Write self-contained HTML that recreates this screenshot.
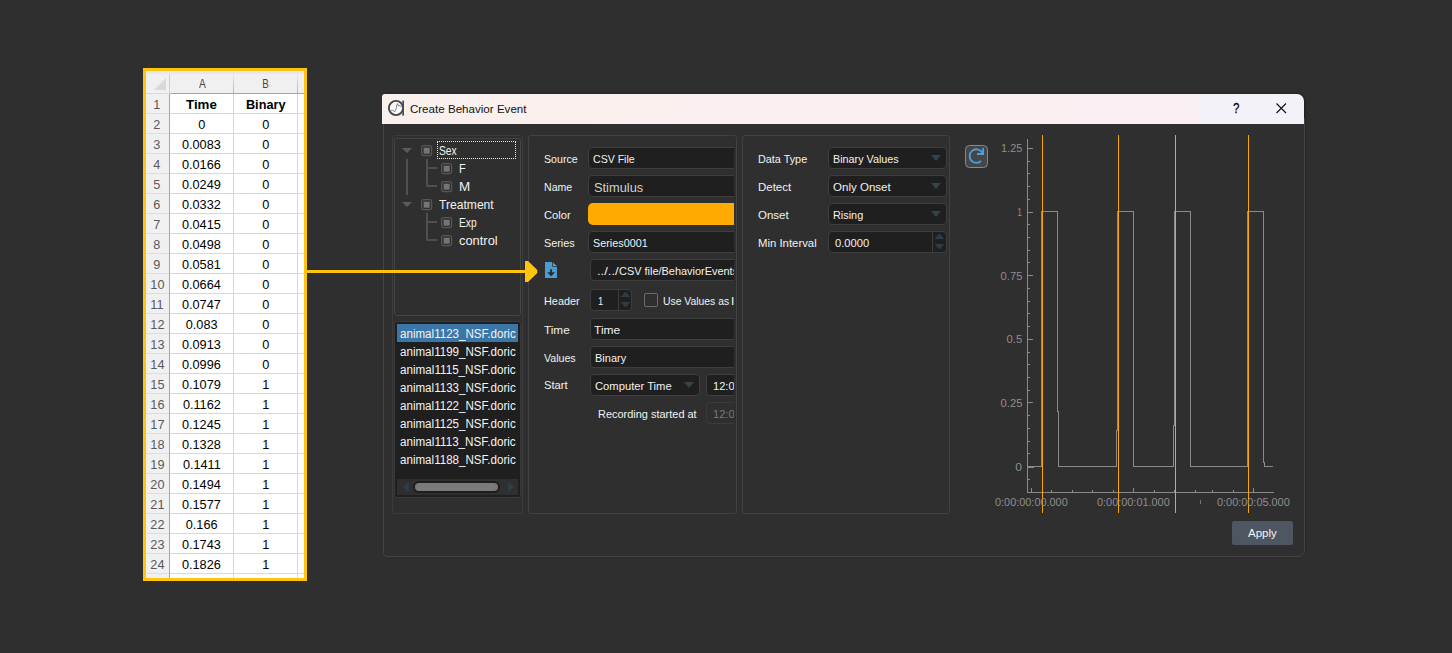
<!DOCTYPE html>
<html lang="en"><head><meta charset="utf-8"><title>Create Behavior Event</title>
<style>
html,body{margin:0;padding:0}
body{width:1452px;height:653px;overflow:hidden;background:#2f2f2f;position:relative;font-family:"Liberation Sans",sans-serif;}
.t{position:absolute;white-space:nowrap;line-height:20px;height:20px;display:block}
.abs{position:absolute}
.in{position:absolute;box-sizing:border-box;background:#1f1f1f;border:1px solid #3e3e3e;border-radius:4px}
.frame{position:absolute;box-sizing:border-box;border:1px solid #414141;border-radius:3px}
svg{position:absolute;overflow:visible}
</style></head><body>

<!-- spreadsheet -->
<div style="position:absolute;left:143px;top:68px;width:164px;height:513px;box-sizing:border-box;border:3px solid #ffc40d;background:#fff;"></div>
<div style="position:absolute;left:146px;top:71px;width:158px;height:3px;background:#e4e8f1"></div>
<div style="position:absolute;left:146px;top:74px;width:158px;height:19px;background:#f0f0f0"></div>
<div style="position:absolute;left:146px;top:93px;width:24px;height:485px;background:#f0f0f0"></div>
<div style="position:absolute;left:146px;top:93px;width:24px;height:1px;background:#dadada"></div>
<div style="position:absolute;left:170px;top:93px;width:134px;height:1px;background:#a6a6a6"></div>
<div style="position:absolute;left:169px;top:94px;width:1px;height:484px;background:#a6a6a6"></div>
<div style="position:absolute;left:169px;top:74px;width:1px;height:19px;background:#d0d0d0"></div>
<div style="position:absolute;left:233px;top:74px;width:1px;height:19px;background:linear-gradient(#e8e8e8,#b4b4b4)"></div>
<div style="position:absolute;left:297px;top:74px;width:1px;height:19px;background:linear-gradient(#e8e8e8,#b4b4b4)"></div>
<svg style="left:153px;top:77px" width="14" height="14"><polygon points="13,1 13,13 1,13" fill="#d9d9d9"/></svg>
<div style="position:absolute;left:170px;top:113px;width:134px;height:1px;background:#d8d8d8"></div>
<div style="position:absolute;left:146px;top:113px;width:23px;height:1px;background:#dedede"></div>
<div style="position:absolute;left:170px;top:133px;width:134px;height:1px;background:#d8d8d8"></div>
<div style="position:absolute;left:146px;top:133px;width:23px;height:1px;background:#dedede"></div>
<div style="position:absolute;left:170px;top:153px;width:134px;height:1px;background:#d8d8d8"></div>
<div style="position:absolute;left:146px;top:153px;width:23px;height:1px;background:#dedede"></div>
<div style="position:absolute;left:170px;top:173px;width:134px;height:1px;background:#d8d8d8"></div>
<div style="position:absolute;left:146px;top:173px;width:23px;height:1px;background:#dedede"></div>
<div style="position:absolute;left:170px;top:193px;width:134px;height:1px;background:#d8d8d8"></div>
<div style="position:absolute;left:146px;top:193px;width:23px;height:1px;background:#dedede"></div>
<div style="position:absolute;left:170px;top:213px;width:134px;height:1px;background:#d8d8d8"></div>
<div style="position:absolute;left:146px;top:213px;width:23px;height:1px;background:#dedede"></div>
<div style="position:absolute;left:170px;top:233px;width:134px;height:1px;background:#d8d8d8"></div>
<div style="position:absolute;left:146px;top:233px;width:23px;height:1px;background:#dedede"></div>
<div style="position:absolute;left:170px;top:253px;width:134px;height:1px;background:#d8d8d8"></div>
<div style="position:absolute;left:146px;top:253px;width:23px;height:1px;background:#dedede"></div>
<div style="position:absolute;left:170px;top:273px;width:134px;height:1px;background:#d8d8d8"></div>
<div style="position:absolute;left:146px;top:273px;width:23px;height:1px;background:#dedede"></div>
<div style="position:absolute;left:170px;top:293px;width:134px;height:1px;background:#d8d8d8"></div>
<div style="position:absolute;left:146px;top:293px;width:23px;height:1px;background:#dedede"></div>
<div style="position:absolute;left:170px;top:313px;width:134px;height:1px;background:#d8d8d8"></div>
<div style="position:absolute;left:146px;top:313px;width:23px;height:1px;background:#dedede"></div>
<div style="position:absolute;left:170px;top:333px;width:134px;height:1px;background:#d8d8d8"></div>
<div style="position:absolute;left:146px;top:333px;width:23px;height:1px;background:#dedede"></div>
<div style="position:absolute;left:170px;top:353px;width:134px;height:1px;background:#d8d8d8"></div>
<div style="position:absolute;left:146px;top:353px;width:23px;height:1px;background:#dedede"></div>
<div style="position:absolute;left:170px;top:373px;width:134px;height:1px;background:#d8d8d8"></div>
<div style="position:absolute;left:146px;top:373px;width:23px;height:1px;background:#dedede"></div>
<div style="position:absolute;left:170px;top:393px;width:134px;height:1px;background:#d8d8d8"></div>
<div style="position:absolute;left:146px;top:393px;width:23px;height:1px;background:#dedede"></div>
<div style="position:absolute;left:170px;top:413px;width:134px;height:1px;background:#d8d8d8"></div>
<div style="position:absolute;left:146px;top:413px;width:23px;height:1px;background:#dedede"></div>
<div style="position:absolute;left:170px;top:433px;width:134px;height:1px;background:#d8d8d8"></div>
<div style="position:absolute;left:146px;top:433px;width:23px;height:1px;background:#dedede"></div>
<div style="position:absolute;left:170px;top:453px;width:134px;height:1px;background:#d8d8d8"></div>
<div style="position:absolute;left:146px;top:453px;width:23px;height:1px;background:#dedede"></div>
<div style="position:absolute;left:170px;top:473px;width:134px;height:1px;background:#d8d8d8"></div>
<div style="position:absolute;left:146px;top:473px;width:23px;height:1px;background:#dedede"></div>
<div style="position:absolute;left:170px;top:493px;width:134px;height:1px;background:#d8d8d8"></div>
<div style="position:absolute;left:146px;top:493px;width:23px;height:1px;background:#dedede"></div>
<div style="position:absolute;left:170px;top:513px;width:134px;height:1px;background:#d8d8d8"></div>
<div style="position:absolute;left:146px;top:513px;width:23px;height:1px;background:#dedede"></div>
<div style="position:absolute;left:170px;top:533px;width:134px;height:1px;background:#d8d8d8"></div>
<div style="position:absolute;left:146px;top:533px;width:23px;height:1px;background:#dedede"></div>
<div style="position:absolute;left:170px;top:553px;width:134px;height:1px;background:#d8d8d8"></div>
<div style="position:absolute;left:146px;top:553px;width:23px;height:1px;background:#dedede"></div>
<div style="position:absolute;left:170px;top:573px;width:134px;height:1px;background:#d8d8d8"></div>
<div style="position:absolute;left:146px;top:573px;width:23px;height:1px;background:#dedede"></div>
<div style="position:absolute;left:233px;top:94px;width:1px;height:484px;background:#d8d8d8"></div>
<div style="position:absolute;left:297px;top:94px;width:1px;height:484px;background:#d8d8d8"></div>
<span class="t" style="left:197.56px;top:73.50px;font-size:13.3px;color:#444;transform:scaleX(0.7700);transform-origin:50% 50%;">A</span>
<span class="t" style="left:261.06px;top:73.50px;font-size:13.3px;color:#444;transform:scaleX(0.7300);transform-origin:50% 50%;">B</span>
<span class="t" style="left:153.30px;top:94.50px;font-size:13.3px;color:#595959;transform:scaleX(0.9550);transform-origin:50% 50%;">1</span>
<span class="t" style="left:186.00px;top:94.50px;font-size:13.3px;color:#000;font-weight:700;">Time</span>
<span class="t" style="left:244.80px;top:94.50px;font-size:13.3px;color:#000;font-weight:700;transform:scaleX(0.9550);transform-origin:50% 50%;">Binary</span>
<span class="t" style="left:153.30px;top:114.50px;font-size:13.3px;color:#595959;transform:scaleX(0.9550);transform-origin:50% 50%;">2</span>
<span class="t" style="left:197.70px;top:114.50px;font-size:13.3px;color:#000;transform:scaleX(0.9550);transform-origin:50% 50%;">0</span>
<span class="t" style="left:261.80px;top:114.50px;font-size:13.3px;color:#000;transform:scaleX(0.9550);transform-origin:50% 50%;">0</span>
<span class="t" style="left:153.30px;top:134.50px;font-size:13.3px;color:#595959;transform:scaleX(0.9550);transform-origin:50% 50%;">3</span>
<span class="t" style="left:181.06px;top:134.50px;font-size:13.3px;color:#000;transform:scaleX(0.9550);transform-origin:50% 50%;">0.0083</span>
<span class="t" style="left:261.80px;top:134.50px;font-size:13.3px;color:#000;transform:scaleX(0.9550);transform-origin:50% 50%;">0</span>
<span class="t" style="left:153.30px;top:154.50px;font-size:13.3px;color:#595959;transform:scaleX(0.9550);transform-origin:50% 50%;">4</span>
<span class="t" style="left:181.06px;top:154.50px;font-size:13.3px;color:#000;transform:scaleX(0.9550);transform-origin:50% 50%;">0.0166</span>
<span class="t" style="left:261.80px;top:154.50px;font-size:13.3px;color:#000;transform:scaleX(0.9550);transform-origin:50% 50%;">0</span>
<span class="t" style="left:153.30px;top:174.50px;font-size:13.3px;color:#595959;transform:scaleX(0.9550);transform-origin:50% 50%;">5</span>
<span class="t" style="left:181.06px;top:174.50px;font-size:13.3px;color:#000;transform:scaleX(0.9550);transform-origin:50% 50%;">0.0249</span>
<span class="t" style="left:261.80px;top:174.50px;font-size:13.3px;color:#000;transform:scaleX(0.9550);transform-origin:50% 50%;">0</span>
<span class="t" style="left:153.30px;top:194.50px;font-size:13.3px;color:#595959;transform:scaleX(0.9550);transform-origin:50% 50%;">6</span>
<span class="t" style="left:181.06px;top:194.50px;font-size:13.3px;color:#000;transform:scaleX(0.9550);transform-origin:50% 50%;">0.0332</span>
<span class="t" style="left:261.80px;top:194.50px;font-size:13.3px;color:#000;transform:scaleX(0.9550);transform-origin:50% 50%;">0</span>
<span class="t" style="left:153.30px;top:214.50px;font-size:13.3px;color:#595959;transform:scaleX(0.9550);transform-origin:50% 50%;">7</span>
<span class="t" style="left:181.06px;top:214.50px;font-size:13.3px;color:#000;transform:scaleX(0.9550);transform-origin:50% 50%;">0.0415</span>
<span class="t" style="left:261.80px;top:214.50px;font-size:13.3px;color:#000;transform:scaleX(0.9550);transform-origin:50% 50%;">0</span>
<span class="t" style="left:153.30px;top:234.50px;font-size:13.3px;color:#595959;transform:scaleX(0.9550);transform-origin:50% 50%;">8</span>
<span class="t" style="left:181.06px;top:234.50px;font-size:13.3px;color:#000;transform:scaleX(0.9550);transform-origin:50% 50%;">0.0498</span>
<span class="t" style="left:261.80px;top:234.50px;font-size:13.3px;color:#000;transform:scaleX(0.9550);transform-origin:50% 50%;">0</span>
<span class="t" style="left:153.30px;top:254.50px;font-size:13.3px;color:#595959;transform:scaleX(0.9550);transform-origin:50% 50%;">9</span>
<span class="t" style="left:181.06px;top:254.50px;font-size:13.3px;color:#000;transform:scaleX(0.9550);transform-origin:50% 50%;">0.0581</span>
<span class="t" style="left:261.80px;top:254.50px;font-size:13.3px;color:#000;transform:scaleX(0.9550);transform-origin:50% 50%;">0</span>
<span class="t" style="left:149.60px;top:274.50px;font-size:13.3px;color:#595959;transform:scaleX(0.9550);transform-origin:50% 50%;">10</span>
<span class="t" style="left:181.06px;top:274.50px;font-size:13.3px;color:#000;transform:scaleX(0.9550);transform-origin:50% 50%;">0.0664</span>
<span class="t" style="left:261.80px;top:274.50px;font-size:13.3px;color:#000;transform:scaleX(0.9550);transform-origin:50% 50%;">0</span>
<span class="t" style="left:150.10px;top:294.50px;font-size:13.3px;color:#595959;transform:scaleX(0.9550);transform-origin:50% 50%;">11</span>
<span class="t" style="left:181.06px;top:294.50px;font-size:13.3px;color:#000;transform:scaleX(0.9550);transform-origin:50% 50%;">0.0747</span>
<span class="t" style="left:261.80px;top:294.50px;font-size:13.3px;color:#000;transform:scaleX(0.9550);transform-origin:50% 50%;">0</span>
<span class="t" style="left:149.60px;top:314.50px;font-size:13.3px;color:#595959;transform:scaleX(0.9550);transform-origin:50% 50%;">12</span>
<span class="t" style="left:184.76px;top:314.50px;font-size:13.3px;color:#000;transform:scaleX(0.9550);transform-origin:50% 50%;">0.083</span>
<span class="t" style="left:261.80px;top:314.50px;font-size:13.3px;color:#000;transform:scaleX(0.9550);transform-origin:50% 50%;">0</span>
<span class="t" style="left:149.60px;top:334.50px;font-size:13.3px;color:#595959;transform:scaleX(0.9550);transform-origin:50% 50%;">13</span>
<span class="t" style="left:181.06px;top:334.50px;font-size:13.3px;color:#000;transform:scaleX(0.9550);transform-origin:50% 50%;">0.0913</span>
<span class="t" style="left:261.80px;top:334.50px;font-size:13.3px;color:#000;transform:scaleX(0.9550);transform-origin:50% 50%;">0</span>
<span class="t" style="left:149.60px;top:354.50px;font-size:13.3px;color:#595959;transform:scaleX(0.9550);transform-origin:50% 50%;">14</span>
<span class="t" style="left:181.06px;top:354.50px;font-size:13.3px;color:#000;transform:scaleX(0.9550);transform-origin:50% 50%;">0.0996</span>
<span class="t" style="left:261.80px;top:354.50px;font-size:13.3px;color:#000;transform:scaleX(0.9550);transform-origin:50% 50%;">0</span>
<span class="t" style="left:149.60px;top:374.50px;font-size:13.3px;color:#595959;transform:scaleX(0.9550);transform-origin:50% 50%;">15</span>
<span class="t" style="left:181.06px;top:374.50px;font-size:13.3px;color:#000;transform:scaleX(0.9550);transform-origin:50% 50%;">0.1079</span>
<span class="t" style="left:261.80px;top:374.50px;font-size:13.3px;color:#000;transform:scaleX(0.9550);transform-origin:50% 50%;">1</span>
<span class="t" style="left:149.60px;top:394.50px;font-size:13.3px;color:#595959;transform:scaleX(0.9550);transform-origin:50% 50%;">16</span>
<span class="t" style="left:181.55px;top:394.50px;font-size:13.3px;color:#000;transform:scaleX(0.9550);transform-origin:50% 50%;">0.1162</span>
<span class="t" style="left:261.80px;top:394.50px;font-size:13.3px;color:#000;transform:scaleX(0.9550);transform-origin:50% 50%;">1</span>
<span class="t" style="left:149.60px;top:414.50px;font-size:13.3px;color:#595959;transform:scaleX(0.9550);transform-origin:50% 50%;">17</span>
<span class="t" style="left:181.06px;top:414.50px;font-size:13.3px;color:#000;transform:scaleX(0.9550);transform-origin:50% 50%;">0.1245</span>
<span class="t" style="left:261.80px;top:414.50px;font-size:13.3px;color:#000;transform:scaleX(0.9550);transform-origin:50% 50%;">1</span>
<span class="t" style="left:149.60px;top:434.50px;font-size:13.3px;color:#595959;transform:scaleX(0.9550);transform-origin:50% 50%;">18</span>
<span class="t" style="left:181.06px;top:434.50px;font-size:13.3px;color:#000;transform:scaleX(0.9550);transform-origin:50% 50%;">0.1328</span>
<span class="t" style="left:261.80px;top:434.50px;font-size:13.3px;color:#000;transform:scaleX(0.9550);transform-origin:50% 50%;">1</span>
<span class="t" style="left:149.60px;top:454.50px;font-size:13.3px;color:#595959;transform:scaleX(0.9550);transform-origin:50% 50%;">19</span>
<span class="t" style="left:181.55px;top:454.50px;font-size:13.3px;color:#000;transform:scaleX(0.9550);transform-origin:50% 50%;">0.1411</span>
<span class="t" style="left:261.80px;top:454.50px;font-size:13.3px;color:#000;transform:scaleX(0.9550);transform-origin:50% 50%;">1</span>
<span class="t" style="left:149.60px;top:474.50px;font-size:13.3px;color:#595959;transform:scaleX(0.9550);transform-origin:50% 50%;">20</span>
<span class="t" style="left:181.06px;top:474.50px;font-size:13.3px;color:#000;transform:scaleX(0.9550);transform-origin:50% 50%;">0.1494</span>
<span class="t" style="left:261.80px;top:474.50px;font-size:13.3px;color:#000;transform:scaleX(0.9550);transform-origin:50% 50%;">1</span>
<span class="t" style="left:149.60px;top:494.50px;font-size:13.3px;color:#595959;transform:scaleX(0.9550);transform-origin:50% 50%;">21</span>
<span class="t" style="left:181.06px;top:494.50px;font-size:13.3px;color:#000;transform:scaleX(0.9550);transform-origin:50% 50%;">0.1577</span>
<span class="t" style="left:261.80px;top:494.50px;font-size:13.3px;color:#000;transform:scaleX(0.9550);transform-origin:50% 50%;">1</span>
<span class="t" style="left:149.60px;top:514.50px;font-size:13.3px;color:#595959;transform:scaleX(0.9550);transform-origin:50% 50%;">22</span>
<span class="t" style="left:184.76px;top:514.50px;font-size:13.3px;color:#000;transform:scaleX(0.9550);transform-origin:50% 50%;">0.166</span>
<span class="t" style="left:261.80px;top:514.50px;font-size:13.3px;color:#000;transform:scaleX(0.9550);transform-origin:50% 50%;">1</span>
<span class="t" style="left:149.60px;top:534.50px;font-size:13.3px;color:#595959;transform:scaleX(0.9550);transform-origin:50% 50%;">23</span>
<span class="t" style="left:181.06px;top:534.50px;font-size:13.3px;color:#000;transform:scaleX(0.9550);transform-origin:50% 50%;">0.1743</span>
<span class="t" style="left:261.80px;top:534.50px;font-size:13.3px;color:#000;transform:scaleX(0.9550);transform-origin:50% 50%;">1</span>
<span class="t" style="left:149.60px;top:554.50px;font-size:13.3px;color:#595959;transform:scaleX(0.9550);transform-origin:50% 50%;">24</span>
<span class="t" style="left:181.06px;top:554.50px;font-size:13.3px;color:#000;transform:scaleX(0.9550);transform-origin:50% 50%;">0.1826</span>
<span class="t" style="left:261.80px;top:554.50px;font-size:13.3px;color:#000;transform:scaleX(0.9550);transform-origin:50% 50%;">1</span>
<!-- dialog -->
<div style="position:absolute;left:386px;top:95px;width:918px;height:460px;border-radius:3px 7px 7px 4px;box-shadow:0 0 3px 1px rgba(0,0,0,0.42)"></div>
<div style="position:absolute;left:383px;top:118px;width:922px;height:439px;box-sizing:border-box;border:1px solid #444;border-radius:0 0 7px 4px;background:#2f2f2f"></div>
<div style="position:absolute;left:382px;top:94px;width:922.3px;height:30px;border-radius:3px 7px 0 0;background:linear-gradient(90deg,#f9f0ee 0%,#faf0f0 65%,#faeff4 88.3%,#f2f2f8 88.9%,#f2f3f9 100%)"></div>
<svg style="left:387px;top:99px" width="20" height="20" viewBox="0 0 20 20">
<circle cx="9" cy="9" r="7.1" fill="#fcfcfc" stroke="#474a4c" stroke-width="1.9"/>
<rect x="15.3" y="1.6" width="1.7" height="15.1" fill="#4b4e50"/>
<polyline points="4.2,11.5 5.8,11.1 7,12.1 7.7,12.9 8.7,11.3 10.3,4.6 11.7,7 12.9,6.4 13.7,7 14.9,8.6" fill="none" stroke="#7d8184" stroke-width="1" stroke-linejoin="round"/>
</svg>
<span class="t" style="left:409.90px;top:99.00px;font-size:11.6px;color:#111;">Create Behavior Event</span>
<span class="t" style="left:1233.00px;top:98.20px;font-size:14px;color:#0a0a0a;transform:scaleX(0.8220);transform-origin:0 50%;-webkit-text-stroke:0.3px #0a0a0a;">?</span>
<svg style="left:1276px;top:103px" width="11" height="11"><path d="M0.5,0.5 L10,10 M10,0.5 L0.5,10" stroke="#111" stroke-width="1.1" fill="none"/></svg>
<div class="frame" style="left:392px;top:135px;width:131px;height:379px;border-color:#3c3c3c"></div>
<div class="frame" style="left:394px;top:138px;width:127px;height:178px;border-color:#444"></div>
<div class="frame" style="left:394px;top:321px;width:127px;height:176.6px;border-color:#3a3a3a;background:#1f1f1f"></div>
<svg style="left:402px;top:148px" width="10" height="5"><polygon points="0,0 10,0 5,5" fill="#5c5c5c"/></svg>
<svg style="left:421px;top:145px" width="12" height="12"><rect x="0.6" y="0.6" width="10" height="10" rx="2" fill="#2f2f2f" stroke="#575757" stroke-width="1.2"/><rect x="2.6" y="2.7" width="6.1" height="6" fill="#747474"/></svg>
<svg style="left:402px;top:202px" width="10" height="5"><polygon points="0,0 10,0 5,5" fill="#5c5c5c"/></svg>
<svg style="left:421px;top:199px" width="12" height="12"><rect x="0.6" y="0.6" width="10" height="10" rx="2" fill="#2f2f2f" stroke="#575757" stroke-width="1.2"/><rect x="2.6" y="2.7" width="6.1" height="6" fill="#747474"/></svg>
<svg style="left:441px;top:163px" width="12" height="12"><rect x="0.6" y="0.6" width="10" height="10" rx="2" fill="#2f2f2f" stroke="#575757" stroke-width="1.2"/><rect x="2.6" y="2.7" width="6.1" height="6" fill="#747474"/></svg>
<svg style="left:441px;top:181px" width="12" height="12"><rect x="0.6" y="0.6" width="10" height="10" rx="2" fill="#2f2f2f" stroke="#575757" stroke-width="1.2"/><rect x="2.6" y="2.7" width="6.1" height="6" fill="#747474"/></svg>
<svg style="left:441px;top:217px" width="12" height="12"><rect x="0.6" y="0.6" width="10" height="10" rx="2" fill="#2f2f2f" stroke="#575757" stroke-width="1.2"/><rect x="2.6" y="2.7" width="6.1" height="6" fill="#747474"/></svg>
<svg style="left:441px;top:235px" width="12" height="12"><rect x="0.6" y="0.6" width="10" height="10" rx="2" fill="#2f2f2f" stroke="#575757" stroke-width="1.2"/><rect x="2.6" y="2.7" width="6.1" height="6" fill="#747474"/></svg>
<div style="position:absolute;left:406px;top:159px;width:2px;height:36px;background:#505050"></div>
<div style="position:absolute;left:426.3px;top:159px;width:1.8px;height:27.5px;background:#505050;border-radius:0 0 0 2px"></div>
<div style="position:absolute;left:426.3px;top:167px;width:10.7px;height:2px;background:#505050;border-radius:0 0 0 2px"></div>
<div style="position:absolute;left:426.3px;top:184.6px;width:10.7px;height:2px;background:#505050;border-radius:0 0 0 2px"></div>
<div style="position:absolute;left:426.3px;top:213px;width:1.8px;height:27.5px;background:#505050;border-radius:0 0 0 2px"></div>
<div style="position:absolute;left:426.3px;top:221px;width:10.7px;height:2px;background:#505050;border-radius:0 0 0 2px"></div>
<div style="position:absolute;left:426.3px;top:238.6px;width:10.7px;height:2px;background:#505050;border-radius:0 0 0 2px"></div>
<div style="position:absolute;left:437px;top:141px;width:79px;height:18px;box-sizing:border-box;border:1px dotted #e8e8e8"></div>
<span class="t" style="left:438.90px;top:141.00px;font-size:12.5px;color:#f2f2f2;transform:scaleX(0.8217);transform-origin:0 50%;">Sex</span>
<span class="t" style="left:459.40px;top:159.00px;font-size:12.5px;color:#f2f2f2;transform:scaleX(0.8775);transform-origin:0 50%;">F</span>
<span class="t" style="left:459.40px;top:177.00px;font-size:12.5px;color:#f2f2f2;transform:scaleX(1.0756);transform-origin:0 50%;">M</span>
<span class="t" style="left:438.90px;top:195.00px;font-size:12.5px;color:#f2f2f2;transform:scaleX(0.9681);transform-origin:0 50%;">Treatment</span>
<span class="t" style="left:459.40px;top:213.00px;font-size:12.5px;color:#f2f2f2;transform:scaleX(0.8217);transform-origin:0 50%;">Exp</span>
<span class="t" style="left:459.40px;top:231.00px;font-size:12.5px;color:#f2f2f2;transform:scaleX(1.0315);transform-origin:0 50%;">control</span>
<div style="position:absolute;left:397px;top:324px;width:120.5px;height:18px;background:#3a77a8"></div>
<span class="t" style="left:400.40px;top:324.00px;font-size:12.5px;color:#f4f4f4;transform:scaleX(0.9268);transform-origin:0 50%;">animal1123_NSF.doric</span>
<span class="t" style="left:400.40px;top:342.00px;font-size:12.5px;color:#f4f4f4;transform:scaleX(0.9268);transform-origin:0 50%;">animal1199_NSF.doric</span>
<span class="t" style="left:400.40px;top:360.00px;font-size:12.5px;color:#f4f4f4;transform:scaleX(0.9338);transform-origin:0 50%;">animal1115_NSF.doric</span>
<span class="t" style="left:400.40px;top:378.00px;font-size:12.5px;color:#f4f4f4;transform:scaleX(0.9268);transform-origin:0 50%;">animal1133_NSF.doric</span>
<span class="t" style="left:400.40px;top:396.00px;font-size:12.5px;color:#f4f4f4;transform:scaleX(0.9268);transform-origin:0 50%;">animal1122_NSF.doric</span>
<span class="t" style="left:400.40px;top:414.00px;font-size:12.5px;color:#f4f4f4;transform:scaleX(0.9268);transform-origin:0 50%;">animal1125_NSF.doric</span>
<span class="t" style="left:400.40px;top:432.00px;font-size:12.5px;color:#f4f4f4;transform:scaleX(0.9338);transform-origin:0 50%;">animal1113_NSF.doric</span>
<span class="t" style="left:400.40px;top:450.00px;font-size:12.5px;color:#f4f4f4;transform:scaleX(0.9268);transform-origin:0 50%;">animal1188_NSF.doric</span>
<div style="position:absolute;left:397px;top:479px;width:121px;height:16px;background:#2f2f2f"></div>
<div style="position:absolute;left:413px;top:481px;width:87px;height:12px;background:#1e1e1e;border-radius:6px"></div>
<div style="position:absolute;left:415px;top:482.6px;width:83px;height:8.6px;background:#7a7a7a;border-radius:4.3px"></div>
<svg style="left:403px;top:482px" width="6" height="10"><polygon points="5.6,0 5.6,10 0.4,5" fill="#2f404d"/></svg>
<svg style="left:508px;top:482px" width="6" height="10"><polygon points="0.4,0 0.4,10 5.6,5" fill="#2f404d"/></svg>
<div class="frame" style="left:528px;top:135px;width:209px;height:379px"></div>
<div class="abs" style="left:529px;top:136px;width:205px;height:377px;overflow:hidden"><div class="abs" style="left:-529px;top:-136px;width:1452px;height:653px">
<span class="t" style="left:543.90px;top:149.00px;font-size:11.6px;color:#f2f2f2;transform:scaleX(0.9169);transform-origin:0 50%;">Source</span>
<span class="t" style="left:543.90px;top:177.00px;font-size:11.6px;color:#f2f2f2;transform:scaleX(0.9114);transform-origin:0 50%;">Name</span>
<span class="t" style="left:543.90px;top:205.00px;font-size:11.6px;color:#f2f2f2;transform:scaleX(0.9632);transform-origin:0 50%;">Color</span>
<span class="t" style="left:543.90px;top:233.00px;font-size:11.6px;color:#f2f2f2;transform:scaleX(0.9337);transform-origin:0 50%;">Series</span>
<span class="t" style="left:543.90px;top:291.00px;font-size:11.6px;color:#f2f2f2;transform:scaleX(0.9383);transform-origin:0 50%;">Header</span>
<span class="t" style="left:544.20px;top:320.00px;font-size:11.6px;color:#f2f2f2;transform:scaleX(1.0139);transform-origin:0 50%;">Time</span>
<span class="t" style="left:544.20px;top:348.00px;font-size:11.6px;color:#f2f2f2;transform:scaleX(0.9160);transform-origin:0 50%;">Values</span>
<span class="t" style="left:543.90px;top:375.00px;font-size:11.6px;color:#f2f2f2;transform:scaleX(0.9675);transform-origin:0 50%;">Start</span>
<div class="in" style="left:588px;top:147px;width:160px;height:22px"></div>
<div class="in" style="left:588px;top:175px;width:160px;height:22px"></div>
<div class="in" style="left:588px;top:231px;width:160px;height:22px"></div>
<div style="position:absolute;left:588px;top:203px;width:160px;height:22px;background:#ffaa00;border-radius:5px"></div>
<span class="t" style="left:592.90px;top:149.00px;font-size:11.6px;color:#f2f2f2;transform:scaleX(0.9112);transform-origin:0 50%;">CSV File</span>
<span class="t" style="left:593.90px;top:177.50px;font-size:13.5px;color:#d2d2d2;transform:scaleX(0.9504);transform-origin:0 50%;">Stimulus</span>
<span class="t" style="left:592.90px;top:233.00px;font-size:11.6px;color:#f2f2f2;transform:scaleX(0.9321);transform-origin:0 50%;">Series0001</span>
<svg style="left:545px;top:262px" width="12" height="16" viewBox="0 0 12 16">
<path d="M0,0 H7.2 V4.8 H12 V16 H0 Z" fill="#4b9cd3"/>
<path d="M8.1,0.4 V3.9 H11.7 Z" fill="#58aee8"/>
<path d="M5.2,7.2 H7 V10.2 H10 L6.1,14.2 L2.2,10.2 H5.2 Z" fill="#2b2b2b"/>
</svg>
<div class="in" style="left:590.4px;top:259px;width:160px;height:22px"></div>
<span class="t" style="left:596.90px;top:261.00px;font-size:11.6px;color:#f2f2f2;transform:scaleX(1.1222);transform-origin:0 50%;">../../</span>
<span class="t" style="left:618.90px;top:261.00px;font-size:11.6px;color:#f2f2f2;transform:scaleX(0.9432);transform-origin:0 50%;">CSV file/BehaviorEvents</span>
<div class="in" style="left:590.4px;top:289px;width:42px;height:22px"></div>
<div style="position:absolute;left:618px;top:290px;width:1px;height:20px;background:#3e3e3e"></div>
<svg style="left:620px;top:291px" width="11" height="18"><polygon points="5.5,0.5 10.5,6 0.5,6" fill="#2c3c48"/><polygon points="0.5,11 10.5,11 5.5,16.5" fill="#2c3c48"/></svg>
<span class="t" style="left:597.90px;top:291.00px;font-size:11.6px;color:#f2f2f2;transform:scaleX(0.8060);transform-origin:0 50%;">1</span>
<div style="position:absolute;left:644px;top:293px;width:14px;height:14px;box-sizing:border-box;border:1px solid #6a6a6a;border-radius:2px;background:#2f2f2f"></div>
<span class="t" style="left:662.90px;top:291.00px;font-size:11.6px;color:#f2f2f2;transform:scaleX(0.8954);transform-origin:0 50%;">Use Values as</span>
<span class="t" style="left:731.40px;top:291.00px;font-size:11.6px;color:#f2f2f2;transform:scaleX(1.0290);transform-origin:0 50%;">Index</span>
<div class="in" style="left:590px;top:318px;width:160px;height:22px"></div>
<div class="in" style="left:590px;top:346px;width:160px;height:22px"></div>
<span class="t" style="left:594.40px;top:320.00px;font-size:11.6px;color:#f2f2f2;transform:scaleX(1.0337);transform-origin:0 50%;">Time</span>
<span class="t" style="left:594.90px;top:348.00px;font-size:11.6px;color:#f2f2f2;transform:scaleX(0.9489);transform-origin:0 50%;">Binary</span>
<div class="in" style="left:590px;top:374px;width:110px;height:22px"></div>
<span class="t" style="left:594.90px;top:376.00px;font-size:11.6px;color:#f2f2f2;transform:scaleX(0.9673);transform-origin:0 50%;">Computer Time</span>
<svg style="left:684px;top:382px" width="10" height="6"><polygon points="0,0 10,0 5,6" fill="#33444f"/></svg>
<div class="in" style="left:706px;top:374px;width:60px;height:22px"></div>
<span class="t" style="left:712.90px;top:376.00px;font-size:11.6px;color:#f2f2f2;transform:scaleX(0.9567);transform-origin:0 50%;">12:00:00</span>
<span class="t" style="left:597.90px;top:404.00px;font-size:11.6px;color:#f2f2f2;transform:scaleX(0.9449);transform-origin:0 50%;">Recording started at</span>
<div class="in" style="left:706px;top:402px;width:60px;height:22px;background:#2f2f2f;border-color:#3b3b3b"></div>
<span class="t" style="left:712.90px;top:404.00px;font-size:11.6px;color:#7a7a7a;transform:scaleX(0.9567);transform-origin:0 50%;">12:00:00</span>
</div></div>
<div class="frame" style="left:742px;top:135px;width:208px;height:379px"></div>
<span class="t" style="left:758.40px;top:149.00px;font-size:11.6px;color:#f2f2f2;transform:scaleX(0.9342);transform-origin:0 50%;">Data Type</span>
<span class="t" style="left:758.40px;top:177.00px;font-size:11.6px;color:#f2f2f2;transform:scaleX(0.9903);transform-origin:0 50%;">Detect</span>
<span class="t" style="left:757.90px;top:205.00px;font-size:11.6px;color:#f2f2f2;transform:scaleX(0.9920);transform-origin:0 50%;">Onset</span>
<span class="t" style="left:758.40px;top:233.00px;font-size:11.6px;color:#f2f2f2;transform:scaleX(0.9791);transform-origin:0 50%;">Min Interval</span>
<div class="in" style="left:828px;top:147px;width:119px;height:22px"></div>
<div class="in" style="left:828px;top:175px;width:119px;height:22px"></div>
<div class="in" style="left:828px;top:203px;width:119px;height:22px"></div>
<div class="in" style="left:828px;top:231px;width:119px;height:22px"></div>
<svg style="left:931px;top:155px" width="10" height="6"><polygon points="0,0 10,0 5,6" fill="#33444f"/></svg>
<svg style="left:931px;top:183px" width="10" height="6"><polygon points="0,0 10,0 5,6" fill="#33444f"/></svg>
<svg style="left:931px;top:211px" width="10" height="6"><polygon points="0,0 10,0 5,6" fill="#33444f"/></svg>
<span class="t" style="left:832.90px;top:149.00px;font-size:11.6px;color:#f2f2f2;transform:scaleX(0.9291);transform-origin:0 50%;">Binary Values</span>
<span class="t" style="left:832.90px;top:177.00px;font-size:11.6px;color:#f2f2f2;transform:scaleX(0.9944);transform-origin:0 50%;">Only Onset</span>
<span class="t" style="left:833.40px;top:205.00px;font-size:11.6px;color:#f2f2f2;transform:scaleX(0.9369);transform-origin:0 50%;">Rising</span>
<span class="t" style="left:834.90px;top:233.00px;font-size:11.6px;color:#f2f2f2;transform:scaleX(0.9639);transform-origin:0 50%;">0.0000</span>
<div style="position:absolute;left:932px;top:232px;width:1px;height:20px;background:#3e3e3e"></div>
<svg style="left:934px;top:233px" width="11" height="18"><polygon points="5.5,0.5 10.5,6 0.5,6" fill="#2c3c48"/><polygon points="0.5,11 10.5,11 5.5,16.5" fill="#2c3c48"/></svg>
<div style="position:absolute;left:965px;top:145px;width:23px;height:23px;box-sizing:border-box;border:1px solid #7c8aa0;border-radius:4.5px;background:#464646"></div>
<svg style="left:965px;top:145px" width="23" height="23" viewBox="0 0 23 23">
<path d="M16.8,6.9 A6.8,6.8 0 1 0 16.1,16.0" fill="none" stroke="#45a1e2" stroke-width="1.8"/>
<path d="M17.2,3 H19 V10.1 H12 V8 H15.6 L17.2,6 Z" fill="#45a1e2"/>
</svg>
<svg style="left:0;top:0" width="1452" height="653" shape-rendering="crispEdges">
<path d="M1027.5,139 V492.5 H1274" fill="none" stroke="#8a8a8a" stroke-width="1"/>
<path d="M1028,479.5 h2" stroke="#8a8a8a" stroke-width="1"/>
<path d="M1028,466.5 h4.5" stroke="#8a8a8a" stroke-width="1"/>
<path d="M1028,453.5 h2" stroke="#8a8a8a" stroke-width="1"/>
<path d="M1028,441.5 h2" stroke="#8a8a8a" stroke-width="1"/>
<path d="M1028,428.5 h2" stroke="#8a8a8a" stroke-width="1"/>
<path d="M1028,415.5 h2" stroke="#8a8a8a" stroke-width="1"/>
<path d="M1028,402.5 h4.5" stroke="#8a8a8a" stroke-width="1"/>
<path d="M1028,390.5 h2" stroke="#8a8a8a" stroke-width="1"/>
<path d="M1028,377.5 h2" stroke="#8a8a8a" stroke-width="1"/>
<path d="M1028,364.5 h2" stroke="#8a8a8a" stroke-width="1"/>
<path d="M1028,352.5 h2" stroke="#8a8a8a" stroke-width="1"/>
<path d="M1028,339.5 h4.5" stroke="#8a8a8a" stroke-width="1"/>
<path d="M1028,326.5 h2" stroke="#8a8a8a" stroke-width="1"/>
<path d="M1028,313.5 h2" stroke="#8a8a8a" stroke-width="1"/>
<path d="M1028,301.5 h2" stroke="#8a8a8a" stroke-width="1"/>
<path d="M1028,288.5 h2" stroke="#8a8a8a" stroke-width="1"/>
<path d="M1028,275.5 h4.5" stroke="#8a8a8a" stroke-width="1"/>
<path d="M1028,262.5 h2" stroke="#8a8a8a" stroke-width="1"/>
<path d="M1028,250.5 h2" stroke="#8a8a8a" stroke-width="1"/>
<path d="M1028,237.5 h2" stroke="#8a8a8a" stroke-width="1"/>
<path d="M1028,224.5 h2" stroke="#8a8a8a" stroke-width="1"/>
<path d="M1028,212.5 h4.5" stroke="#8a8a8a" stroke-width="1"/>
<path d="M1028,199.5 h2" stroke="#8a8a8a" stroke-width="1"/>
<path d="M1028,186.5 h2" stroke="#8a8a8a" stroke-width="1"/>
<path d="M1028,173.5 h2" stroke="#8a8a8a" stroke-width="1"/>
<path d="M1028,161.5 h2" stroke="#8a8a8a" stroke-width="1"/>
<path d="M1028,148.5 h4.5" stroke="#8a8a8a" stroke-width="1"/>
<path d="M1031.5,492 v-4.5" stroke="#8a8a8a" stroke-width="1"/>
<path d="M1051.5,492 v-2" stroke="#8a8a8a" stroke-width="1"/>
<path d="M1072.5,492 v-2" stroke="#8a8a8a" stroke-width="1"/>
<path d="M1092.5,492 v-2" stroke="#8a8a8a" stroke-width="1"/>
<path d="M1113.5,492 v-2" stroke="#8a8a8a" stroke-width="1"/>
<path d="M1133.5,492 v-4.5" stroke="#8a8a8a" stroke-width="1"/>
<path d="M1154.5,492 v-2" stroke="#8a8a8a" stroke-width="1"/>
<path d="M1174.5,492 v-2" stroke="#8a8a8a" stroke-width="1"/>
<path d="M1195.5,492 v-2" stroke="#8a8a8a" stroke-width="1"/>
<path d="M1212.5,492 v-2" stroke="#8a8a8a" stroke-width="1"/>
<path d="M1233.5,492 v-2" stroke="#8a8a8a" stroke-width="1"/>
<path d="M1253.5,492 v-4.5" stroke="#8a8a8a" stroke-width="1"/>
<path d="M1028,467.5 H1033 V466.5 H1041.5 V211.5 H1057.5 V411 H1058.5 V466.5 H1116.5 V430 H1117.5 V211.5 H1133.5 V466.5 H1173.5 V425 H1174.5 V211.5 H1190.5 V466.5 H1247.5 V211.5 H1263.5 V462 H1264.5 V466.5 H1273" fill="none" stroke="#8a8a8a" stroke-width="1"/>
<path d="M1042.5,135 V513" stroke="#f7a600" stroke-width="1"/>
<path d="M1118.5,135 V513" stroke="#f7a600" stroke-width="1"/>
<path d="M1175.5,135 V513" stroke="#f7a600" stroke-width="1"/>
<path d="M1248.5,135 V513" stroke="#f7a600" stroke-width="1"/>
<path d="M1200.5,500 v4" stroke="#777" stroke-width="1"/>
</svg>
<span class="t" style="left:1000.59px;top:138.10px;font-size:11px;color:#8e8e8e;transform:scaleX(0.9949);transform-origin:100% 50%;">1.25</span>
<span class="t" style="left:1015.88px;top:202.10px;font-size:11px;color:#8e8e8e;transform:scaleX(0.7846);transform-origin:100% 50%;">1</span>
<span class="t" style="left:1000.59px;top:265.60px;font-size:11px;color:#8e8e8e;transform:scaleX(1.0183);transform-origin:100% 50%;">0.75</span>
<span class="t" style="left:1006.71px;top:329.10px;font-size:11px;color:#8e8e8e;transform:scaleX(1.0333);transform-origin:100% 50%;">0.5</span>
<span class="t" style="left:1000.59px;top:393.10px;font-size:11px;color:#8e8e8e;transform:scaleX(1.0183);transform-origin:100% 50%;">0.25</span>
<span class="t" style="left:1015.88px;top:456.60px;font-size:11px;color:#8e8e8e;transform:scaleX(1.1115);transform-origin:100% 50%;">0</span>
<span class="t" style="left:994.90px;top:492.00px;font-size:11px;color:#8e8e8e;transform:scaleX(0.9904);transform-origin:0 50%;">0:00:00:00.000</span>
<span class="t" style="left:1096.90px;top:492.00px;font-size:11px;color:#8e8e8e;transform:scaleX(0.9904);transform-origin:0 50%;">0:00:00:01.000</span>
<span class="t" style="left:1216.90px;top:492.00px;font-size:11px;color:#8e8e8e;transform:scaleX(0.9904);transform-origin:0 50%;">0:00:00:05.000</span>
<div style="position:absolute;left:1232px;top:520.5px;width:60.6px;height:24px;background:#4e5661;border-radius:2.5px"></div>
<span class="t" style="left:1247.90px;top:523.00px;font-size:11.6px;color:#f4f4f4;transform:scaleX(0.9891);transform-origin:0 50%;">Apply</span>
<svg style="left:0;top:0" width="1452" height="653"><rect x="305" y="270" width="221" height="3" fill="#ffc40d"/><polygon points="525,261 528,261 537.3,270 537.3,273 528,282 525,282" fill="#ffc40d"/></svg>
</body></html>
